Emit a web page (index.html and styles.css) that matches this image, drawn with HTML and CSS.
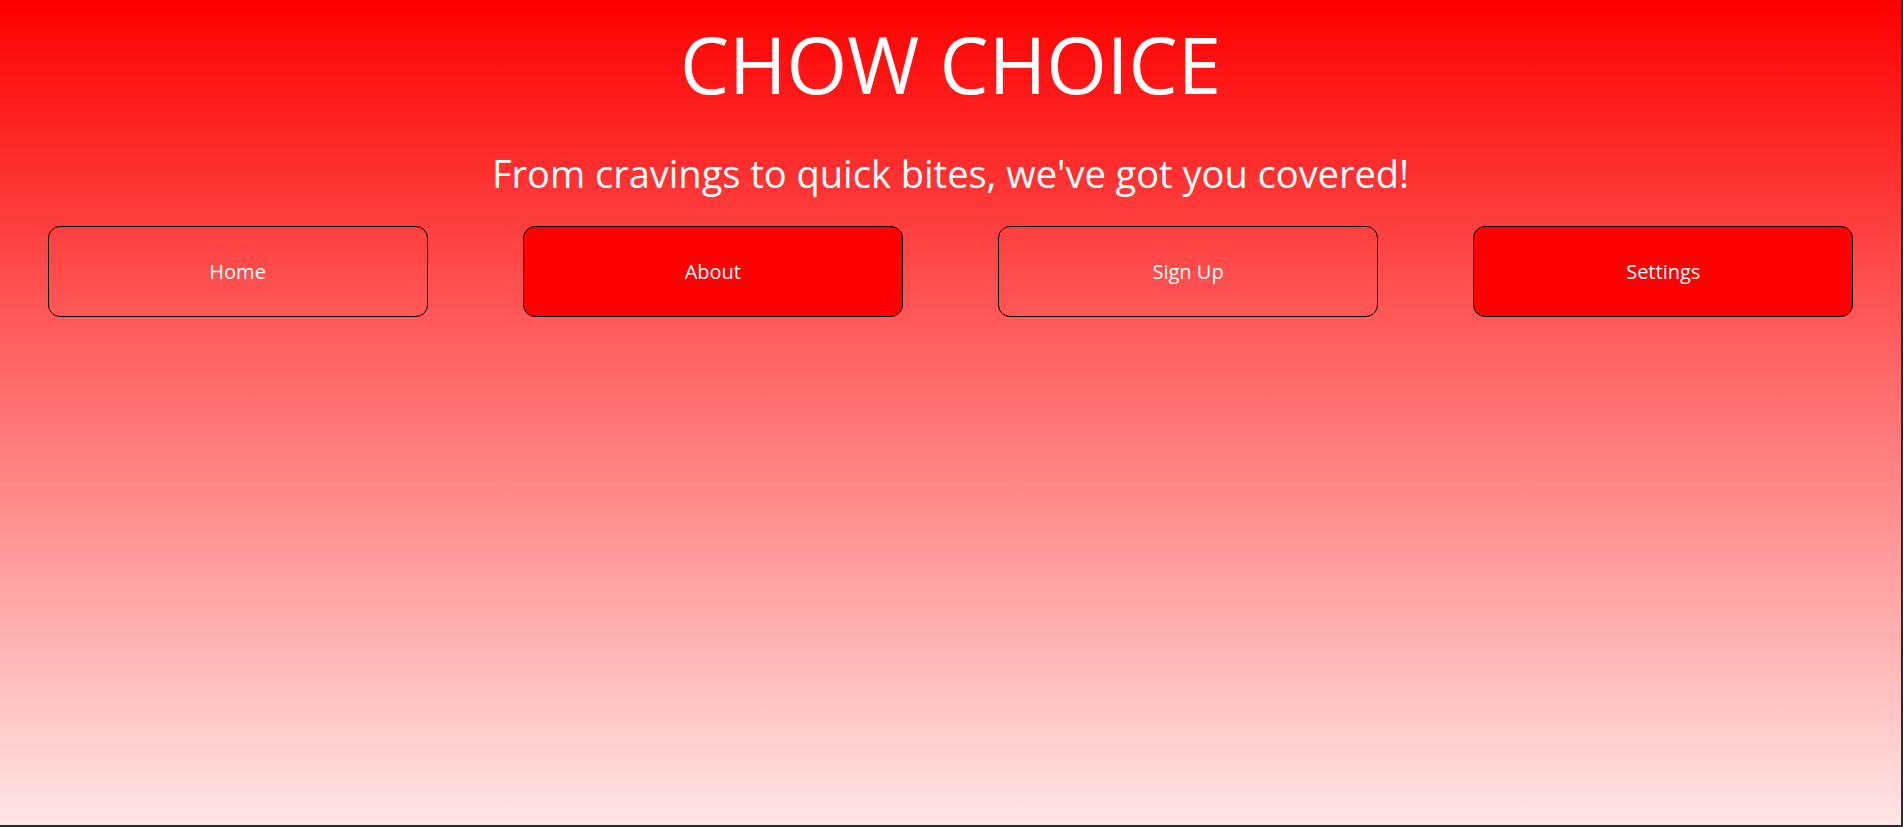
FILE: index.html
```html
<!DOCTYPE html>
<html lang="en">
<head>
<meta charset="utf-8">
<title>Chow Choice</title>
<link rel="stylesheet" href="styles.css">
</head>
<body>
<div class="page">
  <header class="hero">
    <h1 class="title">CHOW CHOICE</h1>
    <p class="tagline">From cravings to quick bites, we've got you covered!</p>
  </header>
  <nav class="nav">
    <a class="nav-btn" href="#">Home</a>
    <a class="nav-btn nav-btn--solid" href="#">About</a>
    <a class="nav-btn" href="#">Sign Up</a>
    <a class="nav-btn nav-btn--solid" href="#">Settings</a>
  </nav>
</div>
</body>
</html>
```

FILE: styles.css
```css
html, body {
  margin: 0;
  padding: 0;
  height: 100%;
}

body {
  font-family: "Open Sans", "Noto Sans", sans-serif;
  color: #fff;
  background: #2b2b2b;
}

.page {
  box-sizing: border-box;
  height: 825px;
  width: 1901px;
  background: linear-gradient(to bottom, #ff0000 0%, #ffe6e6 100%);
  overflow: hidden;
}

.hero {
  text-align: center;
}

.title {
  margin: 0;
  padding-top: 18px;
  font-size: 78px;
  font-weight: 400;
  line-height: 92px;
}

.tagline {
  margin: 37px 0 0;
  font-size: 38px;
  line-height: 52px;
}

.nav {
  display: flex;
  margin-top: 27px;
}

.nav-btn {
  box-sizing: border-box;
  flex: 0 0 20%;
  margin: 0 2.5%;
  height: 91px;
  display: flex;
  align-items: center;
  justify-content: center;
  border: 1px solid #000;
  border-radius: 12px;
  color: #fff;
  text-decoration: none;
  font-size: 20px;
}

.nav-btn--solid {
  background: #ff0000;
}
```
